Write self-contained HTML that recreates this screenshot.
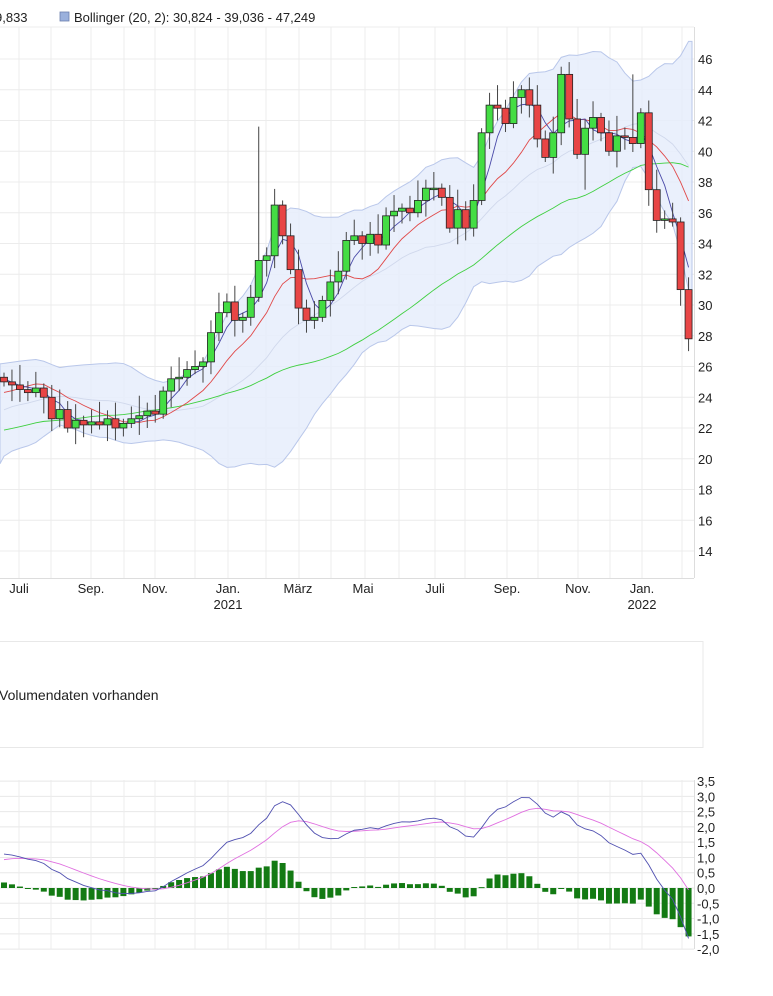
<!DOCTYPE html>
<html><head><meta charset="utf-8"><style>
body{margin:0;background:#fff;width:773px;height:996px;overflow:hidden;font-family:"Liberation Sans",sans-serif;}
svg{position:absolute;left:0;top:0}
</style></head><body>
<svg id="s" width="773" height="996" xmlns="http://www.w3.org/2000/svg" font-family="Liberation Sans, sans-serif" font-size="13">
<text x="-5" y="22" fill="#222">9,833</text>
<rect x="60" y="12" width="9" height="9" fill="#9ab0dc" stroke="#6b7fae" stroke-width="0.8"/>
<text x="74" y="22" fill="#222">Bollinger (20, 2): 30,824 - 39,036 - 47,249</text>
<g id="grid"></g>
<g id="main"></g>
<g fill="#222" text-anchor="middle">
<text x="19" y="593">Juli</text><text x="91" y="593">Sep.</text><text x="155" y="593">Nov.</text>
<text x="228" y="593">Jan.</text><text x="228" y="609">2021</text><text x="298" y="593">März</text>
<text x="363" y="593">Mai</text><text x="435" y="593">Juli</text><text x="507" y="593">Sep.</text>
<text x="578" y="593">Nov.</text><text x="642" y="593">Jan.</text><text x="642" y="609">2022</text>
</g>
<rect x="-1" y="641.5" width="704" height="106" fill="none" stroke="#e8e8e8"/>
<text x="-1" y="700" fill="#222" font-size="14">Volumendaten vorhanden</text>
<g id="low"></g>
</svg>
<script>
var NS="http://www.w3.org/2000/svg";
function el(p,t,a){var e=document.createElementNS(NS,t);for(var k in a)e.setAttribute(k,a[k]);p.appendChild(e);return e;}
var G=document.getElementById('grid'),M=document.getElementById('main'),L=document.getElementById('low');
var vx=[19,51,91,124,155,195,228,266,299,331,365,399,435,465,507,538,578,610,642,682];
function py(p){return 59+(46-p)*15.375;}
for(var p=14;p<=46;p+=2){el(G,'line',{x1:0,x2:694,y1:py(p),y2:py(p),stroke:'#ececec'});
 var t=el(G,'text',{x:698,y:py(p)+5,fill:'#222'});t.textContent=p;}
el(G,'line',{x1:0,x2:694,y1:27,y2:27,stroke:'#ececec'});
vx.forEach(function(x){el(G,'line',{x1:x,x2:x,y1:27,y2:578,stroke:'#ececec'});});
el(G,'line',{x1:0,x2:694,y1:578.5,y2:578.5,stroke:'#ddd'});
el(G,'line',{x1:694.5,x2:694.5,y1:27,y2:578,stroke:'#ddd'});
var C=[25,24.8,24.5,24.3,24.6,24,22.6,23.2,22.0,22.5,22.2,22.4,22.2,22.6,22.0,22.3,22.6,22.8,23.1,22.9,24.4,25.2,25.3,25.8,26.0,26.3,28.2,29.5,30.2,29.0,29.2,30.5,32.9,33.2,36.5,34.5,32.3,29.8,29.0,29.2,30.3,31.5,32.2,34.2,34.5,34.0,34.6,33.9,35.8,36.1,36.3,36.0,36.8,37.6,37.6,37.0,35.0,36.2,35.0,36.8,41.2,43.0,42.8,41.8,43.5,44.0,43.0,40.8,39.6,41.2,45.0,42.1,39.8,41.5,42.2,41.2,40.0,41.0,40.9,40.5,42.5,37.5,35.5,35.6,35.4,31.0,27.8];
var pre=[];for(var i=0;i<40;i++){var b=i<20?20.5:20.5+(i-20)*0.25;pre.push(b+Math.sin(i*0.9)*1.0);}
var A=pre.concat(C),off=pre.length,N=C.length;
function X(i){return 4+7.96*i;}
function sma(n,j){var s=0;for(var k=j-n+1;k<=j;k++)s+=A[k];return s/n;}
function sd(n,j){var m=sma(n,j),s=0;for(var k=j-n+1;k<=j;k++)s+=(A[k]-m)*(A[k]-m);return Math.sqrt(s/n);}
var up=[],dn=[];for(var i=-1;i<=N;i++){var j=Math.min(off+i,off+N-1);var m=sma(20,j),d=sd(20,j);var x=i<0?0:(i==N?692:X(i));up.push(x+','+py(m+2*d));dn.unshift(x+','+py(m-2*d));}
el(M,'polygon',{points:up.concat(dn).join(' '),fill:'#e6edfc','fill-opacity':0.85,stroke:'#b9c7ea','stroke-width':1});
function line(n,col){var pts=[];for(var i=0;i<N;i++)pts.push(X(i)+','+py(sma(n,off+i)));el(M,'polyline',{points:pts.join(' '),fill:'none',stroke:col,'stroke-width':0.9});}
line(20,'#d0d8ec');line(38,'#3fcf3f');line(10,'#e04848');line(4,'#4a4aa8');
for(var i=0;i<N;i++){var c=C[i],o=i?C[i-1]:25.3;var hi=Math.max(o,c)+0.3+((i*7)%5)*0.25,lo=Math.min(o,c)-0.3-((i*3)%4)*0.25;
 if(i==32){hi=41.6;}if(i==70)hi=45.5;if(i==79)hi=45;if(i==73)lo=37.5;
 var x=X(i);el(M,'line',{x1:x,x2:x,y1:py(hi),y2:py(lo),stroke:'#444','stroke-width':1});
 var t=py(Math.max(o,c)),b=py(Math.min(o,c));if(b-t<1.5)b=t+1.5;
 el(M,'rect',{x:x-3.5,y:t,width:7,height:b-t,fill:c>=o?'#44dd44':'#e84545',stroke:'#222','stroke-width':0.8});}
function ly(v){return 888-v*30.55;}
for(var v=-2;v<=3.5;v+=0.5){el(L,'line',{x1:0,x2:694,y1:ly(v),y2:ly(v),stroke:'#e8e8e8'});
 var t=el(L,'text',{x:697,y:ly(v)+5,fill:'#222'});t.textContent=v.toFixed(1).replace('.',',');}
vx.forEach(function(x){el(L,'line',{x1:x,x2:x,y1:780,y2:949,stroke:'#ececec'});});
el(L,'line',{x1:694.5,x2:694.5,y1:780,y2:949,stroke:'#ddd'});
function ema(arr,n){var k=2/(n+1),r=[arr[0]];for(var i=1;i<arr.length;i++)r.push(arr[i]*k+r[i-1]*(1-k));return r;}
var e12=ema(A,12),e26=ema(A,26),mac=e12.map(function(v,i){return v-e26[i];}),sig=ema(mac,9);
var mp=[],sp=[];
for(var i=0;i<N;i++){var j=off+i,h=mac[j]-sig[j];var x=X(i);
 el(L,'rect',{x:x-3,y:Math.min(ly(0),ly(h)),width:6,height:Math.max(1,Math.abs(ly(h)-ly(0))),fill:'#137a13'});
 mp.push(x+','+ly(mac[j]));sp.push(x+','+ly(sig[j]));}
el(L,'polyline',{points:sp.join(' '),fill:'none',stroke:'#e070e0','stroke-width':0.9});
el(L,'polyline',{points:mp.join(' '),fill:'none',stroke:'#5050b0','stroke-width':0.9});
</script>
</body></html>
